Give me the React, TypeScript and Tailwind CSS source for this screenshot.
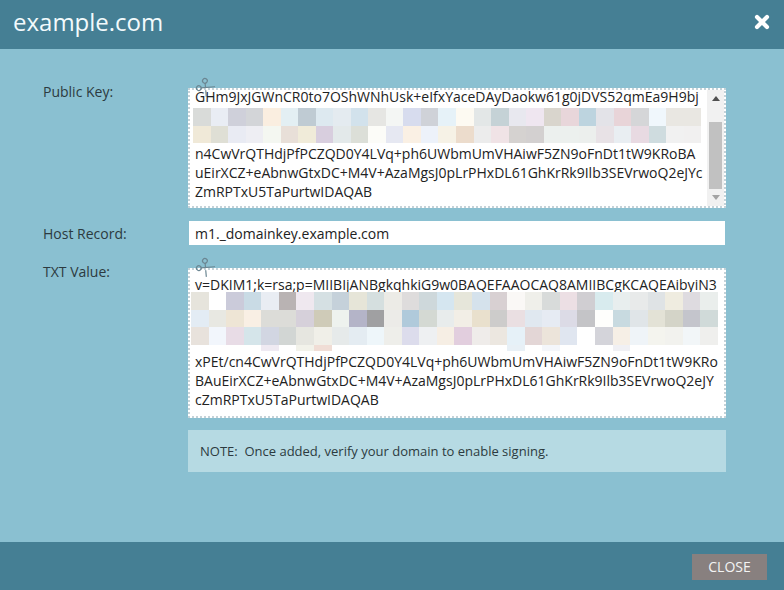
import { Scissors, X } from "lucide-react";

const publicKeyMosaic = [
  "#d9dbd9", "#e9edf4", "#cfd0da", "#d3d5d8", "#faeee0", "#e3eff3", "#bfcbd3", "#dde9f0", "#e4ebf0", "#d2e2ec", "#e6e6e3", "#f4f6f4", "#d7dcee", "#cfd2d8", "#e6f2f8",
  "#fdfaf2", "#e3e7e7", "#c5d2d6", "#e8e8ef", "#efe6f0", "#d9d5cd", "#e8d6da", "#bdd4df", "#e3e3e8", "#e8d4d8", "#d5d6d8", "#f0f7fc", "#e9e7e2", "#e9e7e2",
  "#f0e9d8", "#dfdfd5", "#e9ebf3", "#eeeef3", "#f4f7f1", "#e8dfd8", "#f0ebd9", "#d8cede", "#e3e9ea", "#dcdfd8", "#fcfcf8", "#e6e8f2", "#faf0e4", "#edf2fa", "#f6f2e6",
  "#ecdccc", "#ececec", "#f0e3e6", "#d5d2d0", "#d3d0d0", "#ecf0ee", "#ecf0ee", "#ecefed", "#e8e2e6", "#e9eef2", "#e8dae2", "#cfdcdf", "#f1f1f1", "#f1f0f0",
];

const txtMosaic = [
  "#e6e4dc", "#ffffff", "#cbcbda", "#c9dbe5", "#e9edf3", "#b9b3b3", "#efe8ef", "#d5e0e3", "#c5d1da", "#e6e5d8", "#d5dfdf", "#ecebe6", "#dedcdc", "#ced8db", "#d5e6f0",
  "#e6e6da", "#d5e2ec", "#d8d0d2", "#faf8f6", "#efefea", "#d8dbda", "#ecdfe4", "#d0ced2", "#d8ebee", "#e8eeee", "#e8eaea", "#dfe3e5", "#efece0", "#dedbe0", "#eaeeec",
  "#e3ecf4", "#e8e8e2", "#eee5d5", "#f9efe4", "#dcdcd8", "#dcdcd8", "#d6d0da", "#cfcbb8", "#eef2ee", "#b4b4c8", "#a0a0a2", "#ecebe8", "#b0cadb", "#d4d9d3", "#e8ecec",
  "#f2eee6", "#e9e0cd", "#cdcccb", "#eadfe2", "#e0e8f0", "#e6ebf3", "#dcdbe6", "#c4c4c7", "#fefefc", "#c8dae0", "#e0e5e8", "#e3e2d6", "#d4d4c8", "#c4c5cc", "#d0dad9",
  "#e8e2dc", "#f2f6fc", "#e8dce6", "#d5e5ea", "#d2d6e2", "#d2d6d4", "#e6e6e0", "#f0efe8", "#e6eaea", "#e4ecf2", "#eef6fa", "#eeeeea", "#dcdcec", "#eef0f2", "#f6eee4",
  "#e2cede", "#efecea", "#ece7e0", "#e6f1f8", "#e3d6d6", "#ece4da", "#e0e6f0", "#ffffff", "#d4d4da", "#f6efe6", "#eff4f8", "#f4f4ee", "#f2f2ee", "#f2f6f8", "#efefed",
];

// last, cut-off row of the txt mosaic: only a few cells show at all
const txtMosaicTail: Record<number, string> = {
  4: "#efeaf2",
  6: "#f2f2ea",
  7: "#f0ddd5",
  18: "#e8f0f6",
  20: "#f4f6fa",
  24: "#f0f0f4",
};

function Copy() {
  return (
    <Scissors
      size={19}
      strokeWidth={1.5}
      className="absolute left-[6px] top-[-12px] rotate-[40deg] text-[#6b8692]"
    />
  );
}

function KeyLine({ text }: { text: string }) {
  return <div className="h-[19px] leading-[19px] whitespace-nowrap">{text}</div>;
}

export default function App() {
  return (
    <div className="flex h-[590px] w-[784px] flex-col overflow-hidden bg-[#8ac0d1] font-['Open_Sans',sans-serif] text-sm text-[#2c3a40]">
      <div className="flex h-[49px] items-center justify-between bg-[#457f94] pb-[6px] pl-[13px] pr-[12px]">
        <span className="text-2xl text-[#f2fafc]">example.com</span>
        <X size={20} strokeWidth={5} className="text-white" />
      </div>

      <div className="flex flex-1 flex-col pl-[43px] pt-[39px]">
        <div className="flex">
          <div className="mt-[-6px] w-[145px] leading-[19px]">Public Key:</div>
          <div className="relative flex h-[120px] w-[538px] border-2 border-dotted border-[#c4d2d8] bg-white">
            <Copy />
            <div className="w-[519px] pl-[5px] text-[#222]">
              <div className="mt-[-3px]">
                <KeyLine text="GHm9JxJGWnCR0to7OShWNhUsk+eIfxYaceDAyDaokw61g0jDVS52qmEa9H9bj" />
              </div>
              <div className="ml-[-2px] mt-[2px] grid grid-cols-[repeat(29,17.54px)] auto-rows-[17.5px]">
                {publicKeyMosaic.map((color, i) => (
                  <div key={i} style={{ backgroundColor: color }} />
                ))}
              </div>
              <div className="mt-[1px]">
                <KeyLine text="n4CwVrQTHdjPfPCZQD0Y4LVq+ph6UWbmUmVHAiwF5ZN9oFnDt1tW9KRoBA" />
                <KeyLine text="uEirXCZ+eAbnwGtxDC+M4V+AzaMgsJ0pLrPHxDL61GhKrRk9Ilb3SEVrwoQ2eJYc" />
                <KeyLine text="ZmRPTxU5TaPurtwIDAQAB" />
              </div>
            </div>
            <div className="ml-auto flex w-[17px] flex-col items-center bg-[#f1f1f1]">
              <div className="flex h-[17px] items-center justify-center">
                <div className="h-0 w-0 border-x-4 border-b-[5px] border-x-transparent border-b-[#505050]" />
              </div>
              <div className="mt-[15px] h-[68px] w-[13px] bg-[#c1c1c1]" />
              <div className="mt-auto flex h-[17px] items-center justify-center">
                <div className="h-0 w-0 border-x-4 border-t-[5px] border-x-transparent border-t-[#a3a3a3]" />
              </div>
            </div>
          </div>
        </div>

        <div className="mt-[13px] flex items-center">
          <div className="w-[146px] leading-[19px]">Host Record:</div>
          <div className="h-[24px] w-[536px] bg-white pl-[6px] leading-[25px] text-[#222]">
            m1._domainkey.example.com
          </div>
        </div>

        <div className="mt-[23px] flex">
          <div className="mt-[-6px] w-[145px] leading-[19px]">TXT Value:</div>
          <div className="relative h-[150px] w-[538px] border-2 border-dotted border-[#c4d2d8] bg-white pl-[5px] pt-[5px] text-[#222]">
            <Copy />
            <KeyLine text="v=DKIM1;k=rsa;p=MIIBIjANBgkqhkiG9w0BAQEFAAOCAQ8AMIIBCgKCAQEAibyiN3" />
            <div className="ml-[-4px] mt-[-2px] grid grid-cols-[repeat(30,17.57px)] auto-rows-[17.6px]">
              {txtMosaic.map((color, i) => (
                <div key={i} style={{ backgroundColor: color }} />
              ))}
            </div>
            <div className="ml-[-4px] grid h-[6px] grid-cols-[repeat(30,17.57px)]">
              {Array.from({ length: 30 }, (_, i) => (
                <div key={i} style={{ backgroundColor: txtMosaicTail[i] ?? "#ffffff" }} />
              ))}
            </div>
            <div className="mt-[1px]">
              <KeyLine text="xPEt/cn4CwVrQTHdjPfPCZQD0Y4LVq+ph6UWbmUmVHAiwF5ZN9oFnDt1tW9KRo" />
              <KeyLine text="BAuEirXCZ+eAbnwGtxDC+M4V+AzaMgsJ0pLrPHxDL61GhKrRk9Ilb3SEVrwoQ2eJY" />
              <KeyLine text="cZmRPTxU5TaPurtwIDAQAB" />
            </div>
          </div>
        </div>

        <div className="ml-[145px] mt-[12px] flex h-[42px] w-[538px] items-center bg-[#b6dae3] pl-[12px] text-[13px] whitespace-pre text-[#2c3a40]">
          NOTE:  Once added, verify your domain to enable signing.
        </div>
      </div>

      <div className="flex h-[48px] items-start justify-end bg-[#457f94] pr-[17px] pt-[12px]">
        <button className="h-[26px] w-[75px] bg-[#88807f] text-sm text-[#f4f4f4]">CLOSE</button>
      </div>
    </div>
  );
}
